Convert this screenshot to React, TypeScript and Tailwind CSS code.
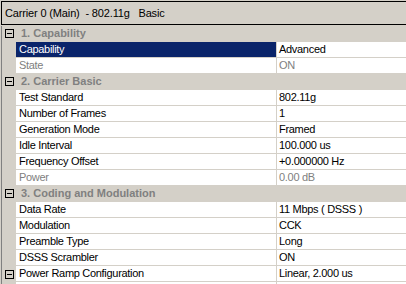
import React from 'react';

type Row =
  | { kind: 'section'; label: string }
  | { kind: 'prop'; name: string; value: string; disabled?: boolean; selected?: boolean; expander?: boolean };

const rows: Row[] = [
  { kind: 'section', label: '1. Capability' },
  { kind: 'prop', name: 'Capability', value: 'Advanced', selected: true },
  { kind: 'prop', name: 'State', value: 'ON', disabled: true },
  { kind: 'section', label: '2. Carrier Basic' },
  { kind: 'prop', name: 'Test Standard', value: '802.11g' },
  { kind: 'prop', name: 'Number of Frames', value: '1' },
  { kind: 'prop', name: 'Generation Mode', value: 'Framed' },
  { kind: 'prop', name: 'Idle Interval', value: '100.000 us' },
  { kind: 'prop', name: 'Frequency Offset', value: '+0.000000 Hz' },
  { kind: 'prop', name: 'Power', value: '0.00 dB', disabled: true },
  { kind: 'section', label: '3. Coding and Modulation' },
  { kind: 'prop', name: 'Data Rate', value: '11 Mbps ( DSSS )' },
  { kind: 'prop', name: 'Modulation', value: 'CCK' },
  { kind: 'prop', name: 'Preamble Type', value: 'Long' },
  { kind: 'prop', name: 'DSSS Scrambler', value: 'ON' },
  { kind: 'prop', name: 'Power Ramp Configuration', value: 'Linear, 2.000 us', expander: true },
  { kind: 'prop', name: '', value: '' },
];

const Expander: React.FC = () => (
  <div className="relative w-[9px] h-[9px] border border-black bg-[#d4d0c8]">
    <div className="absolute left-[1px] top-[3px] w-[5px] h-px bg-black" />
  </div>
);

export default function App() {
  return (
    <div
      className="w-[406px] h-[284px] overflow-hidden bg-[#d4d0c8] text-[11px] leading-[15px] tracking-[-0.3px] text-black"
      style={{ fontFamily: 'Tahoma, "Liberation Sans", Arial, sans-serif' }}
    >
      {/* Title bar */}
      <div className="mt-px ml-px h-[24px] border-t border-l border-b border-black flex items-center pl-[3px]">
        <span className="whitespace-pre text-[11px] tracking-[-0.15px]">Carrier 0 (Main)  - 802.11g   Basic</span>
      </div>

      {/* Property grid */}
      <div className="mt-px ml-px border-l border-[#808080]">
        {rows.map((row, i) =>
          row.kind === 'section' ? (
            <div key={i} className="flex h-[16px] bg-[#d4d0c8] border-b border-[#d4d0c8]">
              <div className="w-[14px] flex items-center justify-center shrink-0 pl-px">
                <Expander />
              </div>
              <div className="pl-[5px] font-bold tracking-[0px] text-[#808080] whitespace-nowrap">{row.label}</div>
            </div>
          ) : (
            <div key={i} className="flex h-[16px]">
              <div className="w-[14px] flex items-center justify-center shrink-0 pl-px">
                {row.expander && <Expander />}
              </div>
              <div
                className={`w-[261px] shrink-0 pl-[3px] border-b border-r border-[#d4d0c8] whitespace-nowrap ${
                  row.selected ? 'bg-[#0a246a] text-white' : 'bg-white'
                } ${row.disabled ? 'text-[#808080]' : ''}`}
              >
                {row.name}
              </div>
              <div
                className={`flex-1 pl-[2px] bg-white border-b border-[#d4d0c8] whitespace-nowrap ${
                  row.disabled ? 'text-[#808080]' : ''
                }`}
              >
                {row.value}
              </div>
            </div>
          )
        )}
      </div>
    </div>
  );
}
